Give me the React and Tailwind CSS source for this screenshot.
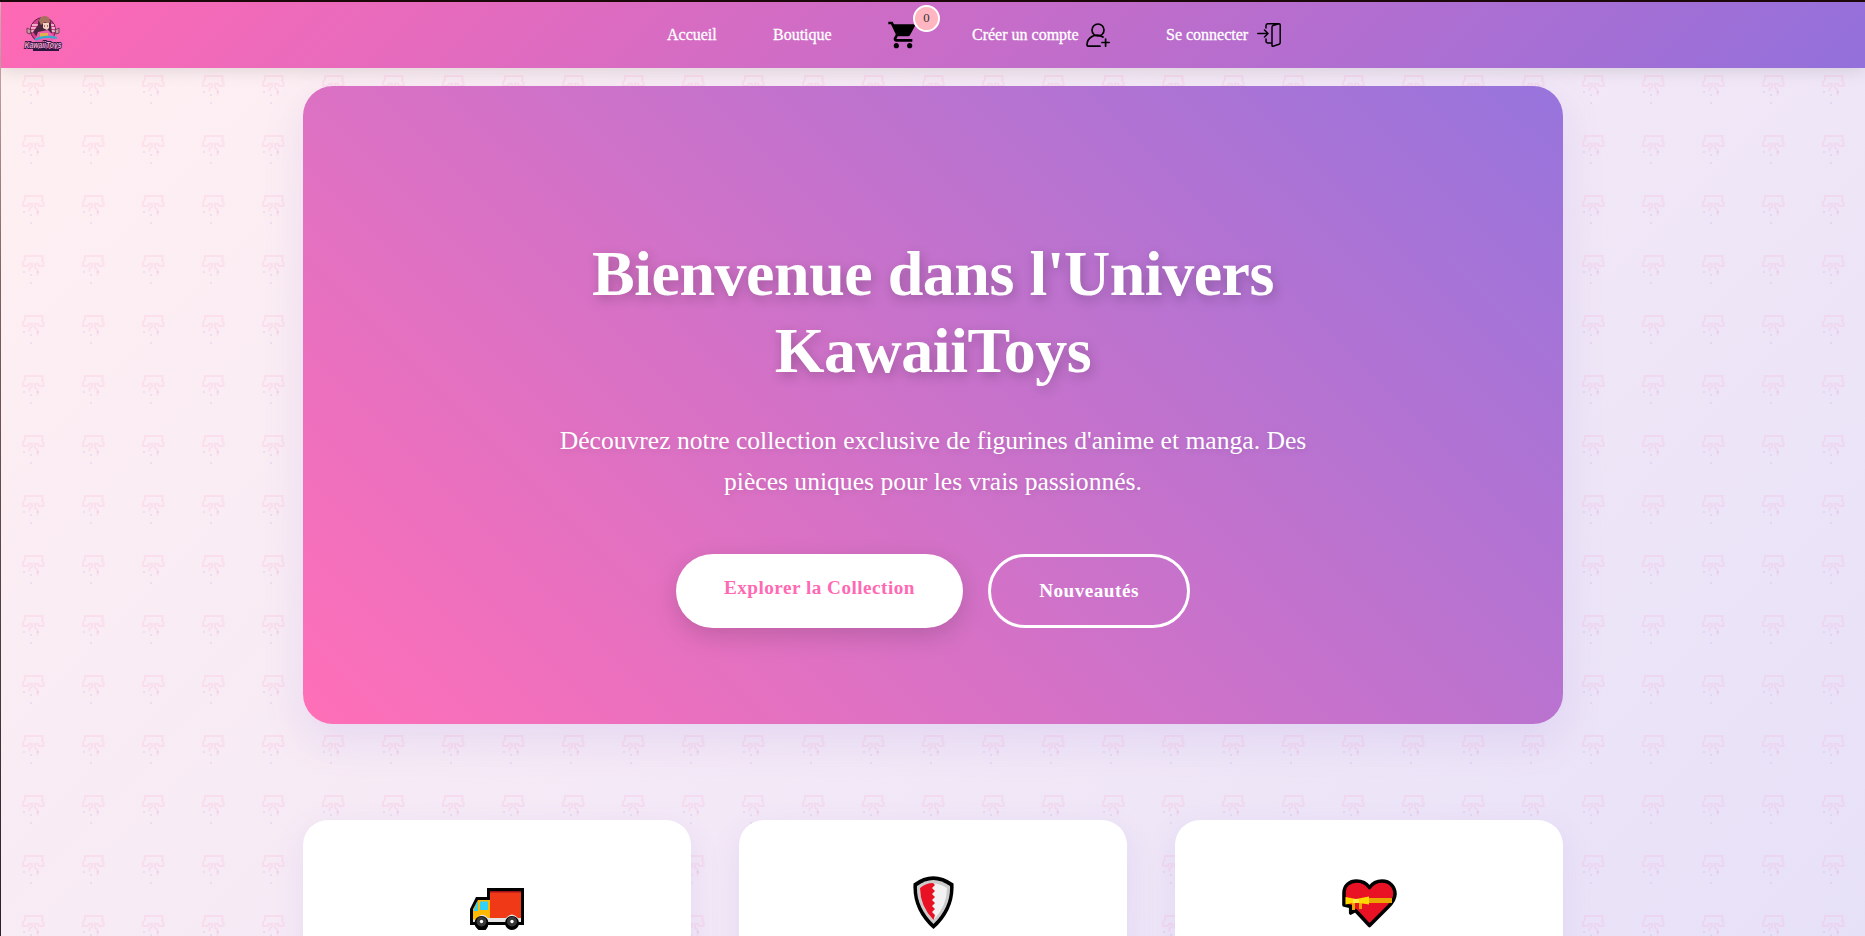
function Pattern() {
  return (
    <svg className="absolute inset-0 h-full w-full" aria-hidden="true">
      <defs>
        <pattern id="kawaii" width="60" height="60" patternUnits="userSpaceOnUse">
          <g transform="translate(-1 -62)">
            <path d="M28 86H22.900V82.500L24.900 79.500V76H42.600V79.500L42 80.500L43.500 82.500V86H39L38 83.800H34.900V87.500L37.500 90V95.500M28 86L29 83.800H32V86.500L29.500 88.500V91.500" fill="none" stroke="#ff69b4" strokeOpacity="0.11" strokeWidth="2" />
            <path d="M23 91h2v2h-2zM37 91h2v2h-2zM30 94h2v2h-2zM30 102h2v2h-2z" fill="#9370db" fillOpacity="0.13" />
          </g>
        </pattern>
      </defs>
      <rect width="100%" height="100%" fill="url(#kawaii)" />
    </svg>
  );
}

function Logo() {
  return (
    <svg className="h-10 w-10 shrink-0 overflow-visible" viewBox="0 3 40 40" aria-hidden="true">
      <circle cx="20" cy="18" r="12.500" fill="#d63f8c" stroke="#5b2447" strokeWidth="1" />
      <path d="M9 13h6M8 16h6M8 19h5M26 13h5M27 16h5M28 19h4" stroke="#fbd0df" strokeWidth="1.500" />
      <path d="M15 13C14 2 29 2 28 13L29 21 14 25 10 20Z" fill="#4d2440" />
      <path d="M16 9Q17 4 22 4 27 4 27 10L25 12 22 10 18 13Z" fill="#a8705f" />
      <path d="M20 11h6v5l-2 2-4-2z" fill="#f7d0bc" />
      <path d="M21 14h1M24 14h1" stroke="#2d1740" />
      <path d="M12 28l3-8 5-1 5-1 8 8-5 4H12z" fill="#ec5fae" />
      <path d="M17 21h8v4h-8z" fill="#e2b04a" />
      <path d="M4 16l4 2-1 4-3-1zM36 16l-4 2 1 4 3-1z" fill="#c99a98" stroke="#4d2948" strokeWidth=".7" />
      <path d="M12 28q9-5 22-2" fill="none" stroke="#39a8cc" strokeWidth="2" />
      <text x="1.500" y="35.500" textLength="37" lengthAdjust="spacingAndGlyphs" fontFamily="Liberation Sans, sans-serif" fontSize="9.500" fontStyle="italic" fontWeight="700" fill="#f4a6d2" stroke="#2d1740" strokeWidth="1.800" paintOrder="stroke">KawaiiToys</text>
      <path d="M10 38h26" stroke="#2d1740" strokeWidth="2" />
    </svg>
  );
}

function UserPlus() {
  return (
    <svg className="h-6 w-6" viewBox="0 0 24 24" fill="none" stroke="#000" strokeWidth="1.700" strokeLinecap="round" strokeLinejoin="round" aria-hidden="true">
      <circle cx="12" cy="7" r="6" />
      <path d="M17 14C9 9 1 15 1 22Q1 23.200 2.500 23.200H14M16 19.500H23.200M19.600 16V23.200" />
    </svg>
  );
}

function Login() {
  return (
    <svg className="h-6 w-6" viewBox="0 0 24 24" fill="none" stroke="#000" strokeWidth="1.500" strokeLinecap="round" strokeLinejoin="round" aria-hidden="true">
      <path d="M0.800 10.500H11M7.500 7L11 10.500L7.500 14M9 5V3Q9 .8 11 .8H22Q23.200 .8 23.200 2V19.500Q23.200 20.700 22 21.200L16 23.200Q15 23.500 15 22.500V4Q15 3 16 2.500L22 .8M9 16V18Q9 20 11 20H14.500" />
    </svg>
  );
}

function Truck() {
  return (
    <svg className="h-[42px] w-[54px]" viewBox="0 0 54 42" aria-hidden="true">
      <path d="M17 0H54V37H47A6 6 0 0 1 37 37H18A6 6 0 0 1 6 37H0V21L6 9H17Z" fill="#000" />
      <path d="M3 21L8 12H20V32H3Z" fill="#ffb900" />
      <path d="M20 3H51V31H20Z" fill="#f03a17" />
      <path d="M20 3H51V4.500H20Z" fill="#a4121c" />
      <path d="M3.500 23L7 14H8V23ZM10 13.500H18V22H10Z" fill="#31d2f7" />
      <path d="M3 31.500H6Q12 23 18 30H36Q42 23 48 30H51V34H3Z" fill="#e5e5e5" />
      <circle cx="11.500" cy="35" r="7" fill="#000" />
      <circle cx="42" cy="35" r="7" fill="#000" />
      <circle cx="11.500" cy="33.500" r="5" fill="#383838" />
      <circle cx="42" cy="33.500" r="5" fill="#383838" />
      <circle cx="11.500" cy="33.500" r="1.700" fill="#fff" />
      <circle cx="42" cy="33.500" r="1.700" fill="#fff" />
    </svg>
  );
}

function Shield() {
  return (
    <svg className="h-[53px] w-[41px]" viewBox="0 0 41 53" aria-hidden="true">
      <path d="M0.500 7.500Q20-7 40.500 7.500Q42 34 20.500 53Q-1 34 .5 7.500Z" fill="#000" />
      <path d="M4 10Q20-2 37 10Q38 31 20.500 48Q3 31 4 10Z" fill="#ccc" />
      <path d="M7 12Q20 3 34 12Q34 30 20.500 44Q7 30 7 12Z" fill="#f2f2f2" />
      <path d="M7 12Q13 7 20 7L22 9 19 12 22 15 19 18 22 21 19 24 22 27 19 30 22 33 19 36 22 39 20.500 44Q7 30 7 12Z" fill="#e81224" />
    </svg>
  );
}

function GiftHeart() {
  return (
    <svg className="h-[50px] w-[56px]" viewBox="0 0 56 50" aria-hidden="true">
      <path d="M27.500 46.500L13.500 31.500L8.700 34V27.500L2 26V14C2 6 8 2 14.500 2C21 2 25 5 27.500 8.500C30 5 34 2 40 2C48 2 53 8 53 15C53 20 50 24 46 28Z" fill="#e81224" stroke="#000" strokeWidth="3.600" strokeLinejoin="round" />
      <path d="M27 19H50V24H27ZM10 23h3v8h-3zM17 23h3v7h-3z" fill="#eba500" />
      <path d="M3.500 18L14 20 27 17.500V25.500L14 23.500 3.500 25.500Z" fill="#ffd800" />
      <path d="M11 20h6v4h-6z" fill="#ffe94a" />
    </svg>
  );
}

function FeatureCard({ children }) {
  return (
    <article className="flex h-[300px] flex-1 justify-center rounded-[25px] bg-white shadow-[0_10px_30px_rgba(147,112,219,0.12)]">
      {children}
    </article>
  );
}

export default function App() {
  return (
    <div className="flex h-[936px] w-full flex-col overflow-hidden border-t-2 border-[#1c0808] font-['Liberation_Serif',serif]">
      <div className="flex min-h-0 flex-1">
        <div className="w-px shrink-0 bg-linear-to-b from-[#dfb5b7] via-[#7c625f] via-30% to-[#2a2025]" />
        <div className="relative flex min-w-0 flex-1 flex-col bg-[linear-gradient(135deg,#fff0f1_0%,#f4e9f6_50%,#e7e1f8_100%)]">
          <Pattern />
          <header className="relative z-10 flex h-[66px] shrink-0 items-center bg-[linear-gradient(135deg,#ff69b4,#9370db)] pl-[22px] shadow-[0_4px_15px_rgba(0,0,0,0.1)]">
            <Logo />
            <nav className="ml-[604px] flex items-center text-base text-white [-webkit-text-stroke:0.3px_currentColor]">
              <a className="w-[106px]">Accueil</a>
              <a className="w-[114px]">Boutique</a>
              <a className="relative w-[85px]">
                <svg className="h-8 w-8" viewBox="0 0 24 24" aria-hidden="true"><path d="M7 18c-1.100 0-1.990.9-1.990 2S5.900 22 7 22s2-.9 2-2-.9-2-2-2zM1 2v2h2l3.600 7.590-1.350 2.450c-.16.280-.25.610-.25.960 0 1.100.9 2 2 2h12v-2H7.420c-.14 0-.25-.11-.25-.25l.03-.12.900-1.630h7.450c.75 0 1.410-.41 1.750-1.030l3.580-6.490A1 1 0 0 0 20 4H5.210l-.94-2H1zm16 16c-1.100 0-1.990.9-1.990 2s.89 2 1.990 2 2-.9 2-2-.9-2-2-2z" /></svg>
                <span className="absolute -top-[14px] left-[26px] flex h-[27px] w-[27px] items-center justify-center rounded-full border-2 border-white bg-[#ffb6c1] text-[12.800px] text-[#333] [-webkit-text-stroke:0px]">0</span>
              </a>
              <a className="flex w-[194px] items-center gap-[7px]">Créer un compte <UserPlus /></a>
              <a className="flex items-center gap-[9px]">Se connecter <Login /></a>
            </nav>
          </header>
          <main className="relative mx-auto flex w-[1260px] flex-col pt-[18px]">
            <section className="flex h-[638px] shrink-0 flex-col items-center rounded-[30px] bg-[linear-gradient(45deg,#ff6fb7,#9774dc)] pt-[150px] text-center text-white shadow-[0_15px_40px_rgba(147,112,219,0.15)]">
              <h1 className="text-[64px] leading-[76.800px] font-bold tracking-[-0.480px] [text-shadow:2px_4px_12px_rgba(0,0,0,0.22)]">Bienvenue dans l'Univers<br />KawaiiToys</h1>
              <p className="mt-[30px] text-[25.600px] leading-[41px] [text-shadow:1px_2px_6px_rgba(0,0,0,0.1)]">Découvrez notre collection exclusive de figurines d'anime et manga. Des<br />pièces uniques pour les vrais passionnés.</p>
              <div className="mt-[52px] flex gap-[25px] text-[19.200px] font-bold tracking-[0.480px]">
                <a className="h-[74px] w-[287px] rounded-full bg-white pt-[24px] leading-5 text-[#ff69b4] shadow-[0_8px_25px_rgba(0,0,0,0.15)]">Explorer la Collection</a>
                <a className="h-[74px] w-[202px] rounded-full border-3 border-white pt-[24px] leading-5">Nouveautés</a>
              </div>
            </section>
            <section className="mt-24 flex gap-12">
              <FeatureCard><div className="pt-[68px]"><Truck /></div></FeatureCard>
              <FeatureCard><div className="pt-[56px]"><Shield /></div></FeatureCard>
              <FeatureCard><div className="pt-[59px] pl-px"><GiftHeart /></div></FeatureCard>
            </section>
          </main>
        </div>
      </div>
    </div>
  );
}
